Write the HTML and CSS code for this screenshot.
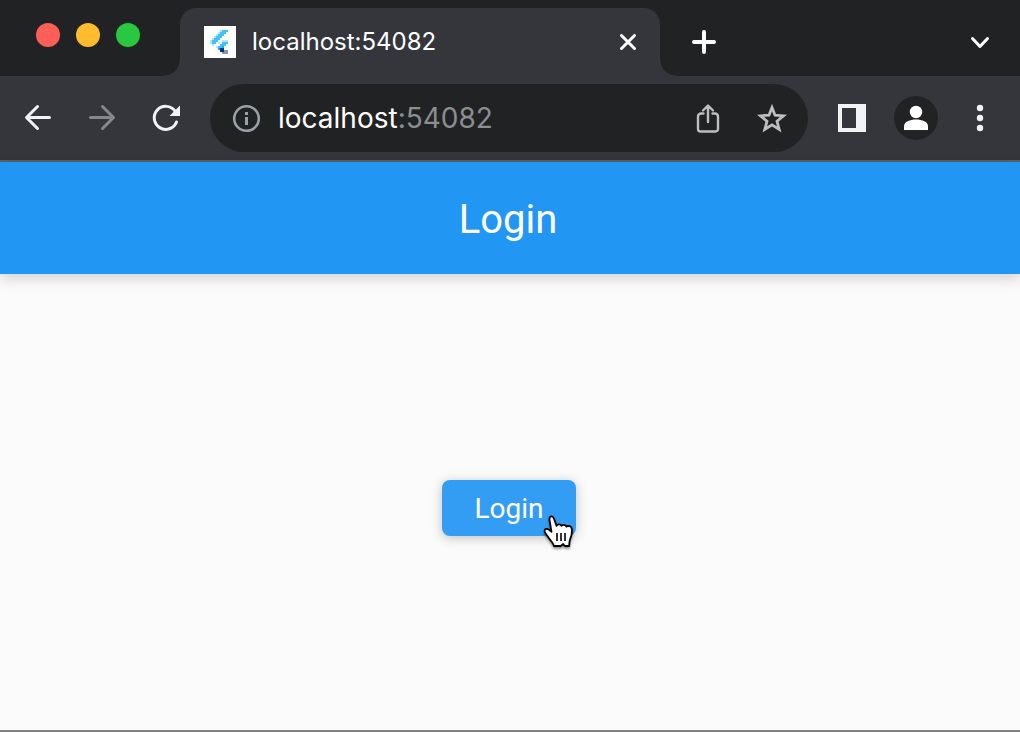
FILE: index.html
```html
<!DOCTYPE html>
<html lang="en">
<head>
<meta charset="utf-8">
<meta name="viewport" content="width=device-width, initial-scale=1">
<title>Login</title>
<link rel="stylesheet" href="styles.css">
</head>
<body>
<div class="browser">
  <header class="tab-strip">
    <div class="lights">
      <button class="light light-close" aria-label="Close window"></button>
      <button class="light light-minimize" aria-label="Minimize window"></button>
      <button class="light light-zoom" aria-label="Zoom window"></button>
    </div>
    <div class="tab">
      <svg class="favicon" viewBox="0 0 16 16" shape-rendering="crispEdges" aria-hidden="true">
        <path fill="#fff" d="M0 0h16v16H0z"/>
        <path fill="#b5e4fc" d="M8 2h4v1H8zM7 3h1v1H7zM6 4h1v1H6zM5 5h1v1H5zM4 6h1v1H4zM3 7h1v1H3zM3 8h2v1H3zM4 9h1v1H4zM9 7h3v1H9zM7 8h1v1H7zM6 10h1v1H6z"/>
        <path fill="#42c0fa" d="M9 2h3v1H9zM8 3h3v1H8zM7 4h3v1H7zM6 5h3v1H6zM5 6h3v1H5zM4 7h3v1H4zM4 8h2v1H4zM9 8h3v1H9zM8 9h3v1H8zM7 10h2v1H7z"/>
        <path fill="#13aeea" d="M9 10h1v1H9zM7 11h1v1H7z"/>
        <path fill="#06308c" d="M8 11h2v1H8zM8 12h3v1H8z"/>
        <path fill="#8495b8" d="M10 12h2v1h-2zM9 13h3v1H9z"/>
      </svg>
      <span class="tab-title">localhost:54082</span>
      <button class="icon-button" aria-label="Close tab">
        <svg class="icon" viewBox="0 0 32 32"><path class="line white" stroke-width="3" d="M9.500 9.500l13 13M22.500 9.500l-13 13"/></svg>
      </button>
    </div>
    <button class="icon-button new-tab" aria-label="New tab">
      <svg class="icon" viewBox="0 0 32 32"><path class="line white" stroke-width="4" d="M16 6v20M6 16h20"/></svg>
    </button>
    <button class="icon-button tab-search" aria-label="Search tabs">
      <svg class="icon" viewBox="0 0 32 32"><path class="line white" stroke-width="3" d="M8.500 12.500l7.500 8 7.500-8"/></svg>
    </button>
  </header>

  <nav class="toolbar" aria-label="Browser toolbar">
    <div class="history">
      <button class="icon-button" aria-label="Back">
        <svg class="icon" viewBox="0 0 32 32"><path class="line" stroke-width="3" d="M27.500 15.500H5M15.500 4.500l-11 11 11 11"/></svg>
      </button>
      <button class="icon-button dim" aria-label="Forward">
        <svg class="icon" viewBox="0 0 32 32"><path class="line" stroke-width="3" d="M4.500 15.500H27M16.500 4.500l11 11-11 11"/></svg>
      </button>
      <button class="icon-button" aria-label="Reload">
        <svg class="icon" viewBox="0 0 32 32"><path class="line" stroke-width="3" d="M26.500 20A11.500 11.500 0 1 1 25 9"/><path class="solid" d="M30 3.500v10.500H19.500z"/></svg>
      </button>
    </div>
    <div class="address">
      <button class="icon-button info" aria-label="Site information">
        <svg class="icon" viewBox="0 0 32 32"><circle class="line" cx="16.500" cy="16.500" r="12.300" stroke-width="2.600"/><path class="solid" d="M15 10h3v3h-3zM15 15h3v8h-3z"/></svg>
      </button>
      <a class="url" href="#"><span>localhost</span><span class="port">:54082</span></a>
      <button class="icon-button page-action" aria-label="Share">
        <svg class="icon" viewBox="0 0 32 32"><path class="line" stroke-width="2.400" d="M11.500 11.500H9a3 3 0 0 0-3 3V27a2.500 2.500 0 0 0 2.500 2.500h15A2.500 2.500 0 0 0 26 27V14.500a3 3 0 0 0-3-3h-2.500M16 20V4.500M11 8.500l5-5 5 5"/></svg>
      </button>
      <button class="icon-button page-action" aria-label="Bookmark">
        <svg class="icon" viewBox="0 0 32 32"><path class="line star" stroke-width="2.800" d="M16 5.500l3 7.700 8.500.6-6.500 5.500 2.200 8.200-7.200-4.600-7.200 4.600 2.200-8.200-6.500-5.500 8.500-.6z"/></svg>
      </button>
    </div>
    <button class="icon-button side-panel" aria-label="Side panel">
      <svg class="panel-icon" viewBox="0 0 28 28"><path class="solid" fill-rule="evenodd" d="M0 0h28v28H0zM4 4v20h14V4z"/></svg>
    </button>
    <button class="avatar" aria-label="Profile">
      <svg class="avatar-icon" viewBox="0 0 44 44"><circle fill="#fff" cx="22" cy="16" r="6.200"/><path fill="#fff" d="M10 34v-3.500c0-5 6-7 12-7s12 2 12 7V34z"/></svg>
    </button>
    <button class="icon-button menu" aria-label="Menu">
      <svg class="icon" viewBox="0 0 32 32"><g class="solid"><circle cx="16" cy="6" r="3.200"/><circle cx="16" cy="16" r="3.200"/><circle cx="16" cy="26" r="3.200"/></g></svg>
    </button>
  </nav>

  <section class="page">
    <div class="app-bar"><h1 class="app-title">Login</h1></div>
    <main class="content">
      <button class="login">Login
        <svg class="cursor" viewBox="0 0 32 36" aria-hidden="true">
          <path fill="#fff" stroke="#000" stroke-width="1.800" stroke-linejoin="round" d="M11 32c-1-3.500-3.500-5.500-5.500-8.500C4 21 1.500 19 1.500 17c0-2.200 2.500-2.800 4.500-1.200l2.500 2L6.500 6c-.6-4 3.200-5 4.400-1.500l2.600 7.300c1-2 4.200-1.800 5 0 1.200-1.600 4.200-1.200 5 .8 1.700-1.200 4.700-.5 5.200 1.900.8 4-.2 7.500-1.500 10.500-1 2.500-1 4-1 7h-4.500l-1.500-2-2.500 2z"/>
          <path stroke="#000" stroke-width="1.600" d="M14 19v8M18 19v8M22 19v8"/>
        </svg>
      </button>
    </main>
  </section>
</div>
</body>
</html>
```
FILE: styles.css
```css
* {
  box-sizing: border-box;
}

body {
  margin: 0;
  font-family: Inter, "Liberation Sans", sans-serif;
}

button {
  margin: 0;
  padding: 0;
  border: 0;
  background: none;
  color: inherit;
  font: inherit;
}

.browser {
  display: flex;
  flex-direction: column;
  min-height: 100vh;
  border-bottom: 2px solid #808080;
  color: #f1f3f4;
}

.tab-strip {
  display: flex;
  align-items: center;
  padding: 8px 24px 0 36px;
  background: #212224;
}

.lights {
  display: flex;
  flex: none;
  gap: 16px;
  width: 144px;
  padding-bottom: 14px;
}

.light {
  width: 24px;
  height: 24px;
  border-radius: 50%;
}

.light-close { background: #ff5f57; }
.light-minimize { background: #febc2e; }
.light-zoom { background: #28c840; }

.tab {
  position: relative;
  display: flex;
  align-items: center;
  flex: 0 1 480px;
  min-width: 0;
  height: 68px;
  padding: 0 16px 0 24px;
  border-radius: 16px 16px 0 0;
  background: #34363b;
}

.tab::before,
.tab::after {
  content: "";
  position: absolute;
  bottom: 0;
  width: 16px;
  height: 16px;
}

.tab::before {
  right: 100%;
  background: radial-gradient(circle at 0 0, #212224 15px, #34363b 16px);
}

.tab::after {
  left: 100%;
  background: radial-gradient(circle at 100% 0, #212224 15px, #34363b 16px);
}

.favicon {
  flex: none;
  width: 32px;
  height: 32px;
}

.tab-title {
  flex: 1;
  min-width: 0;
  margin-left: 16px;
  overflow: hidden;
  font-size: 24px;
  line-height: 32px;
  white-space: nowrap;
  color: #fff;
}

.icon-button {
  flex: none;
  width: 32px;
  height: 32px;
}

.icon {
  display: block;
  width: 32px;
  height: 32px;
}

.line {
  fill: none;
  stroke: currentColor;
  stroke-linecap: round;
  stroke-linejoin: round;
}

.star {
  stroke-linejoin: miter;
}

.solid {
  fill: currentColor;
}

.white {
  stroke: #fff;
}

.new-tab {
  margin-left: 28px;
}

.tab-search {
  margin-left: auto;
}

.toolbar {
  display: flex;
  align-items: center;
  padding: 8px 24px 8px 22px;
  border-bottom: 2px solid #5f6062;
  background: #34363b;
}

.history {
  display: flex;
  gap: 32px;
}

.dim {
  color: #85878a;
}

.address {
  display: flex;
  align-items: center;
  flex: 1;
  min-width: 0;
  height: 68px;
  margin: 0 30px 0 28px;
  padding: 0 20px;
  border-radius: 34px;
  background: #212224;
}

.info {
  color: #9aa0a6;
}

.url {
  flex: 1;
  min-width: 0;
  margin-left: 16px;
  overflow: hidden;
  font-size: 28px;
  line-height: 36px;
  white-space: nowrap;
  text-decoration: none;
  color: #fff;
}

.port {
  color: #8c8e90;
}

.page-action {
  color: #bdbebf;
}

.page-action + .page-action {
  margin-left: 32px;
}

.side-panel,
.panel-icon {
  display: block;
  width: 28px;
  height: 28px;
}

.avatar {
  flex: none;
  width: 44px;
  height: 44px;
  margin: 0 26px 0 28px;
  border-radius: 50%;
  background: #212224;
}

.avatar-icon {
  display: block;
  width: 44px;
  height: 44px;
}

.page {
  display: flex;
  flex: 1;
  flex-direction: column;
  background: #fbfbfb;
  font-family: Roboto, "Liberation Sans", sans-serif;
  color: #fff;
}

.app-bar {
  padding: 34px 4px 30px 0;
  background: #2196f3;
  box-shadow: 0 4px 14px rgba(0, 0, 0, 0.18);
  text-align: center;
}

.app-title {
  margin: 0;
  font-size: 40px;
  font-weight: 400;
  line-height: 48px;
}

.content {
  display: flex;
  flex: 1;
  align-items: center;
  justify-content: center;
  padding: 12px 2px 0 0;
}

.login {
  position: relative;
  padding: 11px 32px 9px;
  border-radius: 8px;
  background: #339df4;
  box-shadow: 0 2px 12px rgba(0, 0, 0, 0.24);
  font-size: 28px;
  line-height: 36px;
}

.cursor {
  position: absolute;
  right: 1px;
  bottom: -14px;
  width: 32px;
  height: 36px;
  fill: none;
  filter: drop-shadow(0 2px 1px rgba(0, 0, 0, 0.4));
}
```
